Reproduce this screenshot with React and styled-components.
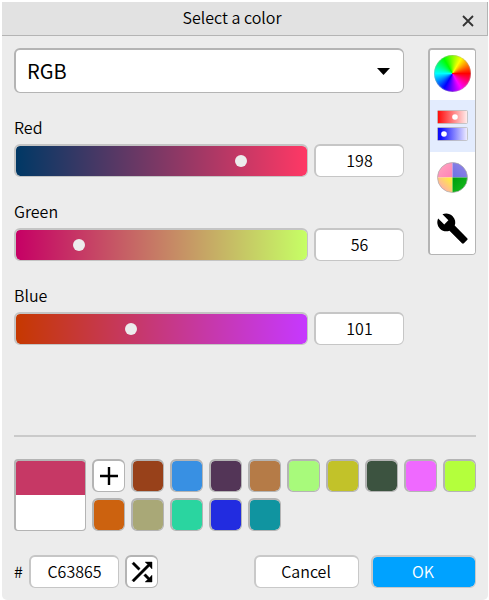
import React from "react";
import styled, { createGlobalStyle } from "styled-components";

const GlobalStyle = createGlobalStyle`
  * { box-sizing: border-box; }
  body {
    margin: 0;
    background: #fff;
    color: #000;
    font: 350 16px/24px "Noto Sans CJK SC", "Noto Sans", sans-serif;
  }
  button, input { font: inherit; color: inherit; margin: 0; padding: 0; }
`;

const Dialog = styled.div`
  width: 486px;
  height: 598px;
  margin: 2px 0 0 2px;
  background: #ececec;
  border-radius: 0 0 5px 5px;
  overflow: hidden;
`;

const TitleBar = styled.header`
  display: grid;
  grid-template-columns: 40px 1fr 40px;
  height: 34px;
  background: #e2e2e2;
  border-bottom: 1px solid #b4b4b4;
  border-right: 1px solid #b4b4b4;
`;

const Title = styled.h1`
  grid-column: 2;
  margin: 3px 25px 0 0;
  font-size: 16px;
  font-weight: 350;
  line-height: 24px;
  text-align: center;
`;

const CloseButton = styled.button`
  border: 0;
  background: none;
  display: flex;
  padding: 13px 0 0 15px;
`;

const Body = styled.main`
  padding: 12px 12px 0;
`;

const Upper = styled.section`
  display: flex;
  justify-content: space-between;
  height: 387px;
`;

const Controls = styled.div`
  width: 390px;
`;

const frame = (color) => `
  border: solid ${color};
  border-width: 2px 1px 1px 2px;
`;

const ModelSelect = styled.button`
  ${frame("#b4b4b4")}
  width: 100%;
  height: 45px;
  padding: 0 13px 0 11px;
  display: flex;
  align-items: center;
  justify-content: space-between;
  border-radius: 6px;
  background: #fff;
  font-size: 20px;
  font-weight: 400;
  line-height: 30px;
`;

const Channel = styled.div`
  height: 84px;
  padding-top: 22px;
`;

const ChannelLabel = styled.label`
  display: block;
  height: 29px;
`;

const ChannelRow = styled.div`
  display: flex;
  gap: 6px;
`;

const Track = styled.div`
  ${frame("#c4c4c4")}
  width: 294px;
  height: 33px;
  display: flex;
  align-items: center;
  border-radius: 6px;
  background: linear-gradient(to right, ${(p) => p.$from}, ${(p) => p.$to}) padding-box;
`;

const Knob = styled.span`
  width: 12px;
  height: 12px;
  margin-left: ${(p) => p.$offset}px;
  border-radius: 50%;
  background: #ececec;
`;

const TextField = styled.input`
  ${frame("#c6c6c6")}
  width: 90px;
  height: 33px;
  padding-bottom: 2px;
  border-radius: 6px;
  background: #fff;
  text-align: center;
  outline: none;
`;

const Modes = styled.nav`
  ${frame("#b4b4b4")}
  width: 48px;
  height: 207px;
  border-radius: 4px;
  background: #fff;
  display: grid;
  grid-template-rows: 50px 52px 51px 51px;
  overflow: hidden;
`;

const Mode = styled.button`
  display: flex;
  align-items: center;
  justify-content: center;
  border: 0;
  background: ${(p) => (p.$active ? "#e3ecfe" : "#fff")};
`;

const Wheel = styled.span`
  width: 37px;
  height: 37px;
  margin-top: -3px;
  border: 1px solid #aaa6;
  border-radius: 50%;
  background: conic-gradient(from 90deg, #f00, #f0f, #00f, #0ff, #0f0, #ff0, #f00) border-box;
`;

const Divider = styled.hr`
  height: 2px;
  margin: 0;
  border: 0;
  background: #cacaca;
`;

const Palette = styled.section`
  display: flex;
  gap: 6px;
  padding-top: 22px;
`;

const Preview = styled.div`
  ${frame("#b4b4b4")}
  width: 72px;
  height: 72px;
  border-radius: 4px;
  background: linear-gradient(#c63865 34px, #fff 34px) padding-box;
`;

const Swatches = styled.div`
  display: grid;
  grid-template-columns: repeat(10, 33px);
  grid-auto-rows: 33px;
  gap: 6px;
`;

const Swatch = styled.button`
  ${frame("#b4b4b4")}
  display: flex;
  align-items: center;
  justify-content: center;
  width: 33px;
  height: 33px;
  border-radius: 6px;
  background: ${(p) => p.$color || "#fff"} padding-box;
`;

const Footer = styled.footer`
  display: flex;
  align-items: center;
  padding-top: 24px;
`;

const Hash = styled.span`
  width: 15px;
  padding-bottom: 2px;
`;

const Actions = styled.div`
  display: flex;
  gap: 12px;
  margin-left: auto;
`;

const ShuffleButton = styled(Swatch)`
  margin-left: 6px;
`;

const Action = styled.button`
  ${frame("#c9c9c9")}
  width: 105px;
  height: 33px;
  padding: 0 2px 2px 0;
  border-radius: 6px;
  background: ${(p) => (p.$primary ? "#00a2ff" : "#fff")} padding-box;
  color: ${(p) => (p.$primary ? "#fff" : "#000")};
`;

const CloseIcon = () => (
  <svg width="12" height="12" viewBox="0 0 12 12" stroke="#333" strokeWidth="1.8">
    <path d="M1 1l10 10M11 1L1 11" />
  </svg>
);

const SlidersIcon = () => (
  <svg width="31" height="32" viewBox="0 0 31 32">
    <defs>
      <linearGradient id="redFade">
        <stop offset="0" stopColor="#ff0808" />
        <stop offset="1" stopColor="#fff0f0" />
      </linearGradient>
      <linearGradient id="blueFade">
        <stop offset="0" stopColor="#0808f4" />
        <stop offset="0.12" stopColor="#1010ff" />
        <stop offset="1" stopColor="#f2f0ff" />
      </linearGradient>
    </defs>
    <rect x=".5" y=".5" width="30" height="13" rx="1" fill="url(#redFade)" stroke="#bbb" strokeOpacity=".8" />
    <rect x=".5" y="17.5" width="30" height="13" rx="1" fill="url(#blueFade)" stroke="#bbb" strokeOpacity=".8" />
    <circle cx="18" cy="7" r="2.8" fill="#fff" />
    <circle cx="7" cy="24" r="2.8" fill="#fff" />
  </svg>
);

const HarmonyIcon = () => (
  <svg width="31" height="31" viewBox="0 0 31 31">
    <defs>
      <linearGradient id="pinkQuarter" x1="0" y1="0" x2="1" y2="1">
        <stop offset="0" stopColor="#ffa8c0" />
        <stop offset="1" stopColor="#ff82b6" />
      </linearGradient>
      <linearGradient id="violetQuarter" x1="0" y1="1" x2="1" y2="0">
        <stop offset="0" stopColor="#6c72e4" />
        <stop offset="1" stopColor="#9684e6" />
      </linearGradient>
      <linearGradient id="yellowQuarter" x1="0" y1="1" x2="1" y2="0">
        <stop offset=".2" stopColor="#ffa8b4" />
        <stop offset="1" stopColor="#fff82c" />
      </linearGradient>
      <linearGradient id="greenQuarter" x1="0" y1="0" x2="1" y2="1">
        <stop offset="0" stopColor="#009c0c" />
        <stop offset="1" stopColor="#18c020" />
      </linearGradient>
    </defs>
    <path d="M15.5 15.5H.5a15 15 0 0 1 15-15z" fill="url(#pinkQuarter)" />
    <path d="M15.5 15.5V.5a15 15 0 0 1 15 15z" fill="url(#violetQuarter)" />
    <path d="M15.5 15.5v15a15 15 0 0 1-15-15z" fill="url(#yellowQuarter)" />
    <path d="M15.5 15.5h15a15 15 0 0 1-15 15z" fill="url(#greenQuarter)" />
    <circle cx="15.5" cy="15.5" r="15" fill="none" stroke="#aaa" strokeOpacity=".7" />
  </svg>
);

const WrenchIcon = () => (
  <svg width="33" height="33" viewBox="0 0 24 24">
    <path d="M22.7 19l-9.1-9.1c.9-2.3.4-5-1.5-6.9-2-2-5-2.4-7.4-1.3L9 6 6 9 1.6 4.7C.4 7.1.9 10.1 2.9 12.1c1.9 1.9 4.6 2.4 6.9 1.5l9.1 9.1c.4.4 1 .4 1.4 0l2.3-2.3c.5-.4.5-1.1.1-1.4z" />
  </svg>
);

const PlusIcon = () => (
  <svg width="18" height="18" viewBox="0 0 18 18" stroke="#000" strokeWidth="2.4">
    <path d="M9 0v18M0 9h18" />
  </svg>
);

const ShuffleIcon = () => (
  <svg width="30" height="30" viewBox="0 0 24 24" stroke="#000" strokeWidth=".35">
    <path d="M10.59 9.17L5.41 4 4 5.41l5.17 5.17 1.42-1.41zM14.5 4l2.04 2.04L4 18.59 5.41 20 17.96 7.46 20 9.5V4h-5.5zm.33 9.41l-1.41 1.41 3.13 3.13L14.5 20H20v-5.5l-2.04 2.04-3.13-3.13z" />
  </svg>
);

const channels = [
  { name: "Red", value: 198, from: "rgb(0,56,101)", to: "rgb(255,56,101)", offset: 219 },
  { name: "Green", value: 56, from: "rgb(198,0,101)", to: "rgb(198,255,101)", offset: 57 },
  { name: "Blue", value: 101, from: "rgb(198,56,0)", to: "rgb(198,56,255)", offset: 109 },
];

const swatches = [
  "#98411a", "#3890e3", "#533557", "#b57b47", "#a8fa7b", "#c2c229", "#3c5340", "#ef69ff", "#b4ff3c",
  "#cc620f", "#a9a877", "#2ad5a0", "#222ce0", "#1094a0",
];

export default function App() {
  return (
    <>
      <GlobalStyle />
      <Dialog role="dialog">
        <TitleBar>
          <Title>Select a color</Title>
          <CloseButton aria-label="Close"><CloseIcon /></CloseButton>
        </TitleBar>
        <Body>
          <Upper>
            <Controls>
              <ModelSelect>
                RGB
                <svg width="13" height="7" viewBox="0 0 13 7"><path d="M0 0h13L6.5 7z" /></svg>
              </ModelSelect>
              {channels.map((c) => (
                <Channel key={c.name}>
                  <ChannelLabel>{c.name}</ChannelLabel>
                  <ChannelRow>
                    <Track $from={c.from} $to={c.to}><Knob $offset={c.offset} /></Track>
                    <TextField defaultValue={c.value} />
                  </ChannelRow>
                </Channel>
              ))}
            </Controls>
            <Modes>
              <Mode><Wheel /></Mode>
              <Mode $active><SlidersIcon /></Mode>
              <Mode><HarmonyIcon /></Mode>
              <Mode><WrenchIcon /></Mode>
            </Modes>
          </Upper>
          <Divider />
          <Palette>
            <Preview />
            <Swatches>
              <Swatch aria-label="Add"><PlusIcon /></Swatch>
              {swatches.map((color) => <Swatch key={color} $color={color} />)}
            </Swatches>
          </Palette>
          <Footer>
            <Hash>#</Hash>
            <TextField defaultValue="C63865" />
            <ShuffleButton aria-label="Random"><ShuffleIcon /></ShuffleButton>
            <Actions>
              <Action>Cancel</Action>
              <Action $primary>OK</Action>
            </Actions>
          </Footer>
        </Body>
      </Dialog>
    </>
  );
}
